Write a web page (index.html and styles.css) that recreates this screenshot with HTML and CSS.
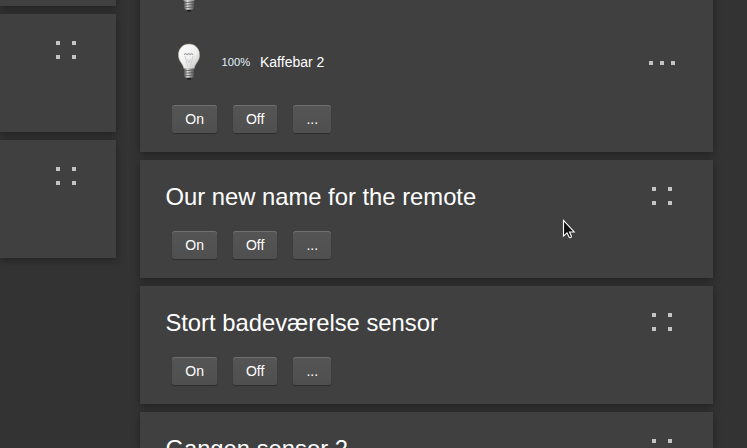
FILE: index.html
```html
<!DOCTYPE html>
<html lang="da">
<head>
<meta charset="utf-8">
<title>Devices</title>
<link rel="stylesheet" href="styles.css">
</head>
<body>
<svg class="defs" aria-hidden="true">
  <defs>
    <linearGradient id="glass" x1="0" y1="0" x2="1" y2="1">
      <stop offset="0" stop-color="#fff"/><stop offset=".6" stop-color="#ededed"/><stop offset="1" stop-color="#b8b8b8"/>
    </linearGradient>
    <linearGradient id="metal">
      <stop offset="0" stop-color="#555"/><stop offset=".35" stop-color="#ddd"/><stop offset=".65" stop-color="#999"/><stop offset="1" stop-color="#555"/>
    </linearGradient>
    <symbol id="bulb" viewBox="0 0 24 38">
      <path d="M12 1C5.600 1 1.400 5.700 1.400 12c0 5.500 3.200 7.600 4.600 11 .500 1.300 .700 2.400 1.200 3h9.600c.500-.600 .700-1.700 1.200-3 1.400-3.400 4.600-5.500 4.600-11C22.600 5.700 18.400 1 12 1z" fill="url(#glass)" stroke="#b3a48c" stroke-width=".5"/>
      <path d="M7 11.500l1.500-.800 1.500.800 1.500-.800 1.500.800 1.500-.800 1.500.800" fill="none" stroke="#777" stroke-width=".9"/>
      <path d="M8 13l2.500 10M16 13l-2.500 10M10.500 16l1.500 4 1.500-4" fill="none" stroke="#c8c8c8" stroke-width=".8"/>
      <path d="M7 25.500h10v7.500l-2.500 2.500h-5L7 33z" fill="url(#metal)"/>
      <path d="M7 27.800l10-.800M7 30.300l10-.800M7.500 32.800l9.500-.800" stroke="#555" stroke-width=".8"/>
      <path d="M9 34.800h6l-1.500 1.800h-3z" fill="#181818"/>
    </symbol>
  </defs>
</svg>
<div class="board">
  <div class="column side">
    <section class="card"></section>
    <section class="card"><div class="head"><i class="grip"></i></div></section>
    <section class="card"><div class="head"><i class="grip"></i></div></section>
  </div>
  <div class="column main">
    <section class="card group">
      <div class="lamp"><svg class="bulb"><use href="#bulb"/></svg></div>
      <div class="lamp">
        <svg class="bulb"><use href="#bulb"/></svg>
        <span class="level">100%</span>
        <span class="name">Kaffebar 2</span>
        <span class="more"><i></i><i></i><i></i></span>
      </div>
      <div class="actions"><button>On</button><button>Off</button><button>...</button></div>
    </section>
    <section class="card">
      <div class="head"><h2>Our new name for the remote</h2><i class="grip"></i></div>
      <div class="actions"><button>On</button><button>Off</button><button>...</button></div>
    </section>
    <section class="card">
      <div class="head"><h2>Stort badeværelse sensor</h2><i class="grip"></i></div>
      <div class="actions"><button>On</button><button>Off</button><button>...</button></div>
    </section>
    <section class="card last">
      <div class="head"><h2>Gangen sensor 2</h2><i class="grip"></i></div>
    </section>
  </div>
</div>
<svg class="pointer" viewBox="0 0 14 22" aria-hidden="true">
  <path d="M1.500 1.500v15.600l3.500-3.300 2.200 4.500c.400 .800 2.600 .100 2.200-1l-1.900-4.300h4.700z" fill="#111" stroke="#fff" stroke-width="1.100"/>
</svg>
</body>
</html>
```
FILE: styles.css
```css
* { box-sizing: border-box; }

body {
  margin: 0;
  height: 448px;
  overflow: hidden;
  background: #333;
  color: #fff;
  font-family: "Liberation Sans", Arial, sans-serif;
}

.defs { display: block; width: 0; height: 0; }

.board { display: flex; gap: 24px; align-items: flex-start; }

.column { display: flex; flex-direction: column; gap: 8px; }
.side { width: 116px; margin-top: -112px; }
.main { width: 573px; margin-top: -26px; }

.card {
  height: 118px;
  padding: 21px 40px 0 25px;
  background: #404040;
  box-shadow: 0 2px 8px rgba(0, 0, 0, .36);
}
.side .card { padding-right: 39px; }
.group { height: 178px; padding-right: 38px; padding-top: 0; }
.last { height: 36px; overflow: hidden; }

.head { display: flex; height: 32px; }

h2 { margin: 0 0 0 .4px; font-size: 23.8px; line-height: 32px; font-weight: 400; white-space: nowrap; }

.grip {
  width: 21px;
  height: 18px;
  margin: 6px 0 0 auto;
  background:
    linear-gradient(#c4c4c4, #c4c4c4) 0 0 / 4px 4px no-repeat,
    linear-gradient(#c4c4c4, #c4c4c4) 16px 0 / 4px 4px no-repeat,
    linear-gradient(#c4c4c4, #c4c4c4) 0 14px / 4px 4px no-repeat,
    linear-gradient(#c4c4c4, #c4c4c4) 16px 14px / 4px 4px no-repeat;
}

.lamp { display: flex; align-items: center; height: 68px; padding-left: 12px; }
.lamp:first-child { height: 54px; padding-bottom: 14px; }
.bulb { width: 24px; height: 38px; }
.level { width: 38.500px; margin-left: 20.500px; font-size: 11.200px; color: #e2f1fa; }
.name { font-size: 14px; }
.more { display: flex; gap: 7px; margin: 2px 0 0 auto; }
.more i { width: 4px; height: 4px; background: #c4c4c4; }

.actions { display: flex; gap: 16px; margin-top: 18px; padding-left: 7.300px; }
.group .actions { margin-top: 9px; }

button {
  height: 28px;
  padding: 0 13px;
  border: 0;
  border-radius: 3px;
  background: linear-gradient(#555, #4f4f4f);
  box-shadow: inset 0 1px #707070, 0 1px 1px rgba(0, 0, 0, .3);
  color: #fff;
  font: 14px/28px "Liberation Sans", Arial, sans-serif;
}

.pointer { position: absolute; left: 562px; top: 219px; width: 14px; height: 22px; }
```
